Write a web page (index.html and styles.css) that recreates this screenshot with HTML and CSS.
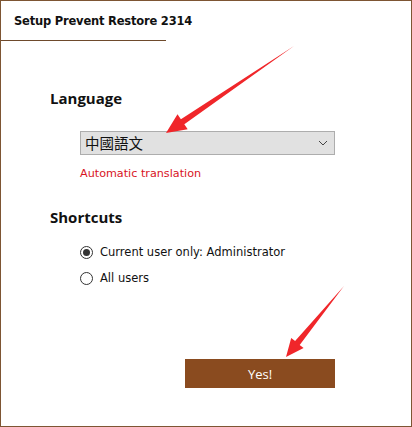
FILE: index.html
```html
<!DOCTYPE html>
<html lang="en">
<head>
    <meta charset="UTF-8">
    <title>Setup Prevent Restore 2314</title>
    <link rel="stylesheet" href="styles.css">
</head>
<body>
<div class="window">
    <div class="title-bar">Setup Prevent Restore 2314</div>

    <div class="content">
        <h3 class="section-title">Language</h3>
        <div class="indent">
            <div class="lang-select">
                <span class="lang-value">中國語文</span>
                <svg class="chevron" width="10" height="6" viewBox="0 0 10 6">
                    <path d="M1 1 L5 5 L9 1" fill="none" stroke="#444" stroke-width="1"/>
                </svg>
            </div>
            <div class="auto-note">Automatic translation</div>
        </div>

        <h3 class="section-title shortcuts">Shortcuts</h3>
        <div class="indent">
            <label class="radio-row">
                <span class="radio checked"></span>
                Current user only: Administrator
            </label>
            <label class="radio-row second">
                <span class="radio"></span>
                All users
            </label>
            <button class="btn-yes">Yes!</button>
        </div>
    </div>

    <!-- red pointer arrows from the screenshot -->
    <svg class="arrows" width="412" height="427" viewBox="0 0 412 427">
        <polygon fill="#f0262a" points="294,46 184.3,124.3 187.7,129.3 166,133 177.5,114.3 180.9,119.3"/>
        <polygon fill="#f0262a" points="344,286 299.7,344.9 303.6,348 286,357 291.2,338 295.1,341.1"/>
    </svg>
</div>
</body>
</html>
```

FILE: styles.css
```css
* {
    box-sizing: border-box;
}
body {
    margin: 0;
    background: #ffffff;
    font-family: 'DejaVu Sans', sans-serif;
}
.window {
    position: relative;
    width: 412px;
    height: 427px;
    border: 1px solid #7d5533;
    background: #ffffff;
}
.title-bar {
    width: 165px;
    height: 40px;
    border-bottom: 1px solid #6e4a2c;
    padding-left: 13px;
    display: flex;
    align-items: center;
    white-space: nowrap;
    font-size: 11.5px;
    font-weight: bold;
    color: #111;
    letter-spacing: -0.2px;
}
.content {
    padding-left: 49px;
    display: flex;
    flex-direction: column;
}
.section-title {
    margin: 47px 0 0 0;
    font-family: 'Open Sans', sans-serif;
    font-size: 15px;
    font-weight: bold;
    line-height: 20px;
    color: #111;
}
.section-title.shortcuts {
    margin-top: 25px;
}
.indent {
    margin-left: 30px;
    width: 255px;
    display: flex;
    flex-direction: column;
}
.lang-select {
    margin-top: 23px;
    height: 24px;
    border: 1px solid #adadad;
    background: #e1e1e1;
    display: flex;
    align-items: center;
    justify-content: space-between;
    padding: 0 6px 0 4px;
}
.lang-value {
    font-family: 'Noto Sans CJK TC', sans-serif;
    font-size: 14.5px;
    color: #111;
    line-height: 18px;
}
.auto-note {
    margin-top: 11px;
    font-size: 11.2px;
    line-height: 16px;
    color: #d8141e;
}
.radio-row {
    margin-top: 15px;
    height: 20px;
    display: flex;
    align-items: center;
    gap: 7px;
    font-size: 11.5px;
    color: #111;
    white-space: nowrap;
}
.radio-row.second {
    margin-top: 6px;
}
.radio {
    width: 13px;
    height: 13px;
    border: 1px solid #333;
    border-radius: 50%;
    display: flex;
    align-items: center;
    justify-content: center;
    background: #fff;
}
.radio.checked::after {
    content: '';
    width: 7px;
    height: 7px;
    border-radius: 50%;
    background: #333;
}
.btn-yes {
    align-self: flex-end;
    margin-top: 71px;
    width: 150px;
    height: 29px;
    border: none;
    background: #8a4b1f;
    color: #fff;
    font-family: 'Open Sans', sans-serif;
    font-size: 13px;
}
.arrows {
    position: absolute;
    left: -1px;
    top: -1px;
    pointer-events: none;
}
```
